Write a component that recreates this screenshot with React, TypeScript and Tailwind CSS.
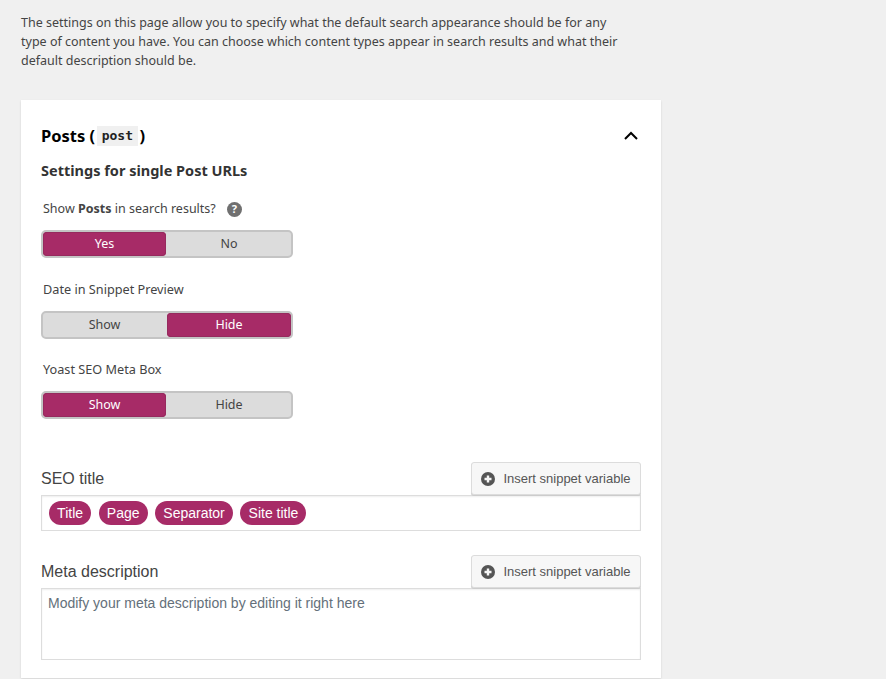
function Toggle({ left, right, active }: { left: string; right: string; active: "left" | "right" }) {
  const on = "bg-[#a72b67] text-white rounded-[4px] shadow-[inset_0_0_0_1px_#962a5e]";
  const off = "text-[#444]";
  return (
    <div className="flex h-[28px] w-[252px] gap-px rounded-[5px] border-2 border-[#c4c4c4] bg-[#dcdcdc] text-[12.5px]">
      <div className={`flex w-[123px] items-center justify-center ${active === "left" ? on : off}`}>{left}</div>
      <div className={`flex w-[124px] items-center justify-center ${active === "right" ? on : off}`}>{right}</div>
    </div>
  );
}

function InsertButton() {
  return (
    <button className="flex h-[33px] w-[170px] items-center justify-center gap-[8px] rounded-[3px] border border-[#dcdcdc] bg-[#f7f7f7] text-[13px] text-[#555] shadow-[0_1px_0_#ccc] font-['Liberation_Sans',sans-serif]">
      <svg width="14" height="14" viewBox="0 0 14 14">
        <circle cx="7" cy="7" r="7" fill="#555" />
        <path d="M3.5 7h7M7 3.5v7" stroke="#f7f7f7" strokeWidth="2.4" />
      </svg>
      Insert snippet variable
    </button>
  );
}

function Pill({ children }: { children: string }) {
  return <span className="flex h-[24px] items-center rounded-full bg-[#a72b67] px-[8.1px] text-white">{children}</span>;
}

export default function App() {
  return (
    <main className="h-[679px] overflow-hidden bg-[#f0f0f0] pl-[21px] pt-[13px] font-['Noto_Sans',sans-serif] text-[#444]">
      <p className="w-[604px] text-[12.5px] leading-[19px]">
        The settings on this page allow you to specify what the default search appearance should be for any type of content you have. You can choose which content types appear in search results and what their default description should be.
      </p>

      <section className="mt-[30px] h-[578px] w-[640px] bg-white px-[20px] pt-[24px] shadow-[0_1px_2px_rgba(0,0,0,0.12)]">
        <div className="flex h-[24px] items-center justify-between pr-[2px]">
          <h2 className="flex items-center text-[16.5px] font-bold text-black">
            Posts (
            <code className="mx-[1.5px] flex h-[20px] items-center bg-[#f0f0f0] px-[5px] font-['DejaVu_Sans_Mono',monospace] text-[13px] font-bold text-[#222]">post</code>
            )
          </h2>
          <svg width="16" height="10" viewBox="0 0 16 10" fill="none" stroke="black" strokeWidth="2">
            <path d="M2 8l6-6 6 6" />
          </svg>
        </div>

        <h3 className="mt-[13px] text-[14.5px] font-bold leading-[19px] text-[#333]">Settings for single Post URLs</h3>

        <div className="mt-[19px] flex h-[20px] items-center pl-[2px] text-[12.5px]">
          Show&nbsp;<b>Posts</b>&nbsp;in search results?
          <span className="ml-[11px] flex h-[15px] w-[15px] items-center justify-center rounded-full bg-[#707070] text-[11px] font-bold text-white">?</span>
        </div>
        <div className="mt-[11px]"><Toggle left="Yes" right="No" active="left" /></div>

        <div className="mt-[22px] flex h-[20px] items-center pl-[2px] text-[12.7px]">Date in Snippet Preview</div>
        <div className="mt-[11px]"><Toggle left="Show" right="Hide" active="right" /></div>

        <div className="mt-[21px] flex h-[20px] items-center pl-[2px] text-[12.7px]">Yoast SEO Meta Box</div>
        <div className="mt-[11px]"><Toggle left="Show" right="Hide" active="left" /></div>

        <div className="font-['Liberation_Sans',sans-serif]">
          <div className="mt-[43px] flex items-end justify-between">
            <span className="pb-[7px] text-[16px] leading-[18px]">SEO title</span>
            <InsertButton />
          </div>
          <div className="flex h-[36px] items-center gap-[7.6px] border border-[#ddd] pl-[7px] text-[14px] shadow-[inset_0_1px_2px_rgba(0,0,0,0.07)]">
            <Pill>Title</Pill>
            <Pill>Page</Pill>
            <Pill>Separator</Pill>
            <Pill>Site title</Pill>
          </div>

          <div className="mt-[24px] flex items-end justify-between">
            <span className="pb-[7px] text-[16px] leading-[18px]">Meta description</span>
            <InsertButton />
          </div>
          <div className="h-[72px] border border-[#ddd] px-[6px] pt-[4px] text-[14px] leading-[20px] text-[#64707a] shadow-[inset_0_1px_2px_rgba(0,0,0,0.07)]">
            Modify your meta description by editing it right here
          </div>
        </div>
      </section>
    </main>
  );
}
